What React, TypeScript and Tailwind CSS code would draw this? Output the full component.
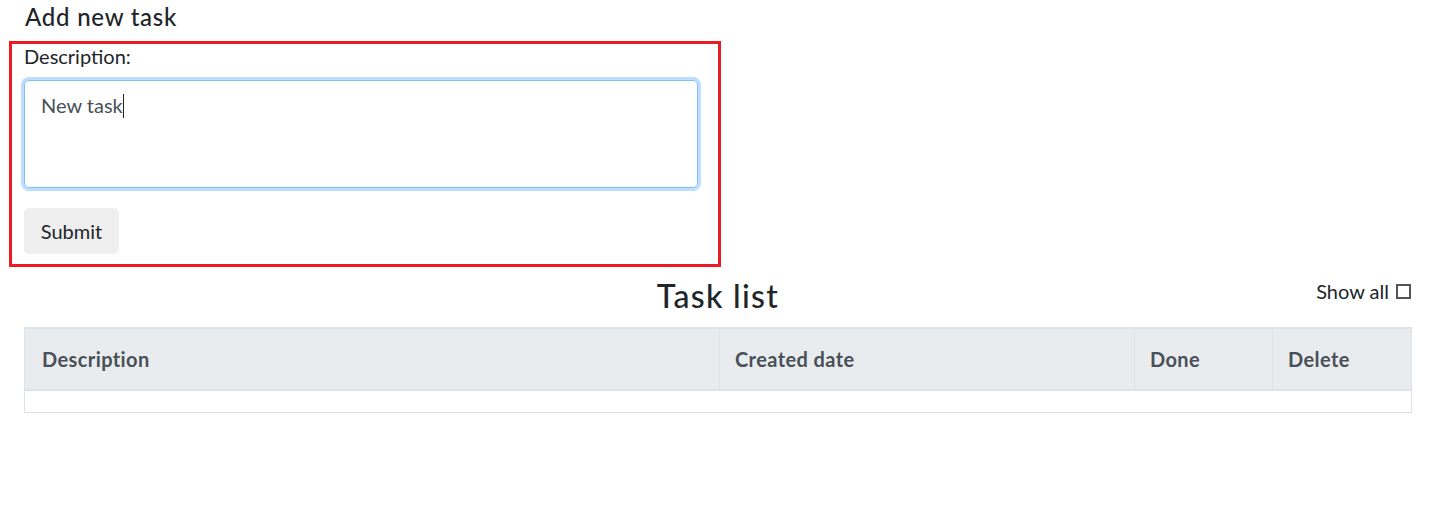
import React from "react";

const font = { fontFamily: '"Segoe UI", Lato, "Open Sans", sans-serif' };

export default function App() {
  return (
    <div className="min-h-[506px] bg-white text-[#212529]" style={font}>
      <h4 className="pl-[25px] pt-[2px] text-[24px] leading-[29px] font-medium tracking-[0.75px]">Add new task</h4>
      <form className="ml-[9px] mt-[10px] w-[712px] border-[3px] border-[#ed1c24] pl-[12px] pb-[10px]">
        <label className="block text-[20px] leading-[24px]">Description:</label>
        <div className="mt-[12px] h-[108px] w-[674px] rounded-[5px] border border-[#80bdff] px-[16px] pt-[8px] text-[20px] leading-[30px] text-[#495057] shadow-[0_0_0_3px_rgba(0,123,255,0.25)]">
          New task<span className="inline-block h-[24px] w-px translate-y-[5px] bg-[#212529]" />
        </div>
        <button type="button" className="mt-[20px] h-[46px] w-[95px] rounded-[5px] bg-[#efefef] text-[20px] leading-[30px] text-[#212529]">
          Submit
        </button>
      </form>
      <div className="mt-[10px] ml-[24px] w-[1388px]">
        <div className="grid grid-cols-[1fr_auto_1fr] items-start">
          <div />
          <h2 className="text-[32px] leading-[38px] font-medium tracking-[1.3px]">Task list</h2>
          <label className="mt-[2px] flex items-center justify-end gap-[7px] text-[20px] leading-[24px]">
            Show all
            <span className="mr-[1px] inline-block h-[15px] w-[15px] border-2 border-[#555]" />
          </label>
        </div>
        <div className="mt-[12px] border border-[#dee2e6]">
          <div className="grid grid-cols-[694px_415px_138px_1fr] border-b-2 border-t border-[#dee2e6] bg-[#e9ecef] text-[20px] font-bold leading-[30px] tracking-[0.4px] text-[#495057]">
            <div className="py-[15px] pl-[17px]">Description</div>
            <div className="border-l border-[#dee2e6] py-[15px] pl-[15px]">Created date</div>
            <div className="border-l border-[#dee2e6] py-[15px] pl-[15px]">Done</div>
            <div className="border-l border-[#dee2e6] py-[15px] pl-[15px]">Delete</div>
          </div>
          <div className="h-[21px]" />
        </div>
      </div>
    </div>
  );
}
